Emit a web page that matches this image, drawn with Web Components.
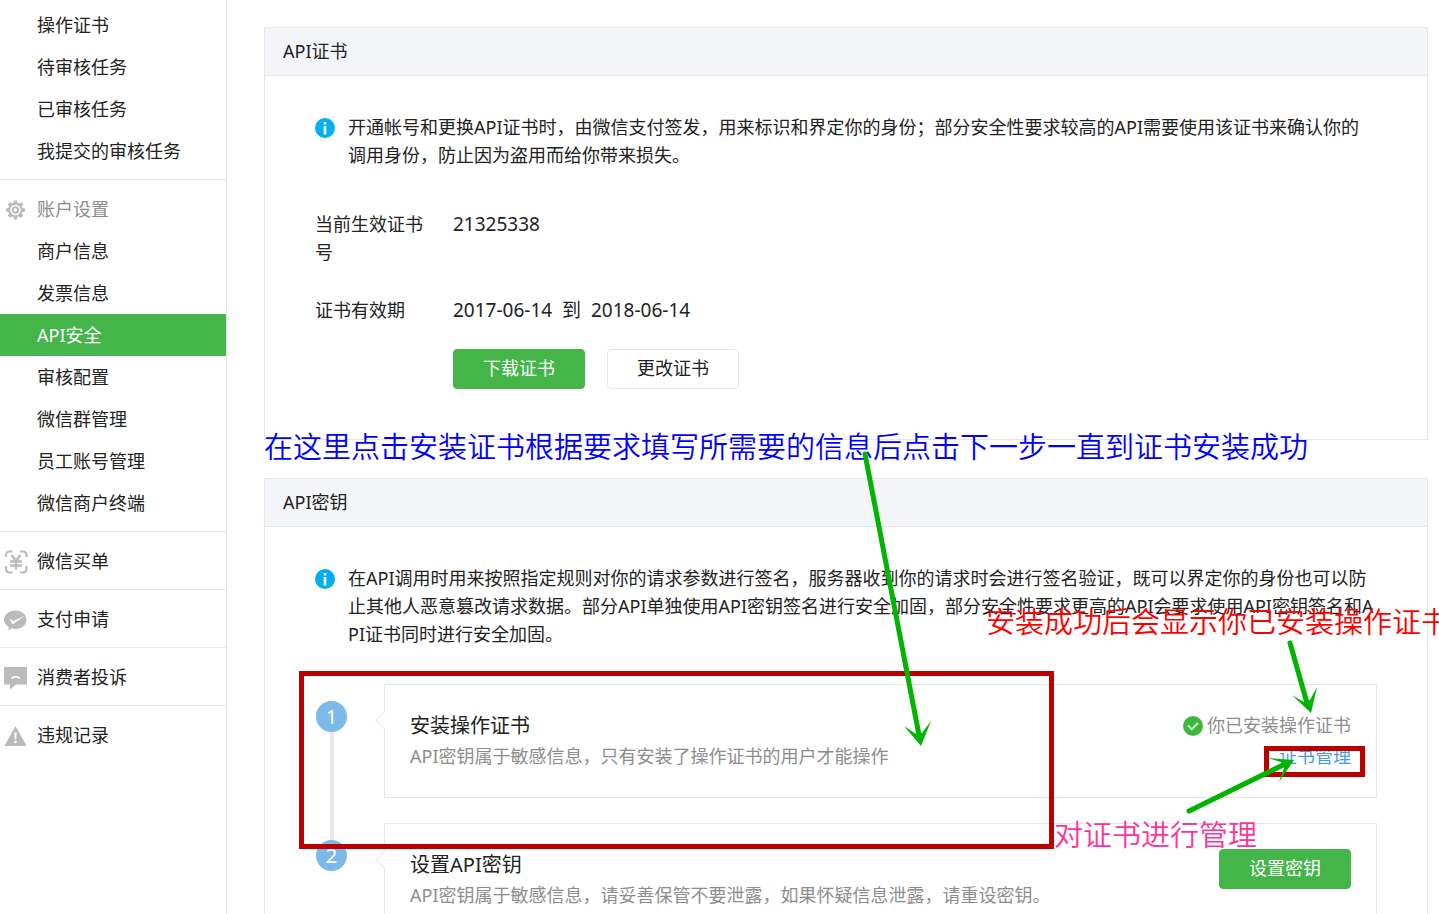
<!DOCTYPE html>
<html lang="zh-CN">
<head>
<meta charset="utf-8">
<title>API安全</title>
<style>
    html {
        scrollbar-width: none;
    }
    body {
        margin: 0;
        background: #fff;
        color: #222;
        font: 400 18px/28px "Noto Sans", "Noto Sans CJK SC", sans-serif;
    }
</style>
</head>
<body>
<merchant-page>
    <side-menu slot="side">
        <menu-group>
            <menu-item>操作证书</menu-item>
            <menu-item>待审核任务</menu-item>
            <menu-item>已审核任务</menu-item>
            <menu-item>我提交的审核任务</menu-item>
        </menu-group>
        <menu-group>
            <menu-item icon="gear" heading>账户设置</menu-item>
            <menu-item>商户信息</menu-item>
            <menu-item>发票信息</menu-item>
            <menu-item active>API安全</menu-item>
            <menu-item>审核配置</menu-item>
            <menu-item>微信群管理</menu-item>
            <menu-item>员工账号管理</menu-item>
            <menu-item>微信商户终端</menu-item>
        </menu-group>
        <menu-group><menu-item icon="yen">微信买单</menu-item></menu-group>
        <menu-group><menu-item icon="pay">支付申请</menu-item></menu-group>
        <menu-group><menu-item icon="complaint">消费者投诉</menu-item></menu-group>
        <menu-group last><menu-item icon="warning">违规记录</menu-item></menu-group>
    </side-menu>

    <content-panel heading="API证书">
        <info-tip>开通帐号和更换API证书时，由微信支付签发，用来标识和界定你的身份；部分安全性要求较高的API需要使用该证书来确认你的调用身份，防止因为盗用而给你带来损失。</info-tip>
        <cert-details>
            <span slot="number">21325338</span>
            <span slot="period">2017-06-14&nbsp; 到&nbsp; 2018-06-14</span>
            <action-button slot="actions" primary>下载证书</action-button>
            <action-button slot="actions">更改证书</action-button>
        </cert-details>
    </content-panel>

    <content-panel heading="API密钥">
        <info-tip>在API调用时用来按照指定规则对你的请求参数进行签名，服务器收到你的请求时会进行签名验证，既可以界定你的身份也可以防止其他人恶意篡改请求数据。部分API单独使用API密钥签名进行安全加固，部分安全性要求更高的API会要求使用API密钥签名和API证书同时进行安全加固。</info-tip>
        <step-list>
            <step-card number="1" heading="安装操作证书">
                API密钥属于敏感信息，只有安装了操作证书的用户才能操作
                <cert-status slot="side">你已安装操作证书</cert-status>
            </step-card>
            <step-card number="2" heading="设置API密钥" last>
                API密钥属于敏感信息，请妥善保管不要泄露，如果怀疑信息泄露，请重设密钥。
                <action-button slot="side" primary>设置密钥</action-button>
            </step-card>
        </step-list>
    </content-panel>

    <note-layer slot="notes">
        <note-box style="--x: 299px; --y: 671px; --w: 755px; --h: 178px"></note-box>
        <note-box style="--x: 1264px; --y: 746px; --w: 101px; --h: 31px"></note-box>
        <note-text style="--x: 264px; --y: 427px; color: #00f">在这里点击安装证书根据要求填写所需要的信息后点击下一步一直到证书安装成功</note-text>
        <note-text style="--x: 986px; --y: 602px; color: #f00">安装成功后会显示你已安装操作证书</note-text>
        <note-text style="--x: 1054px; --y: 815px; color: #ff3399">对证书进行管理</note-text>
    </note-layer>
</merchant-page>

<script>
class BaseElement extends HTMLElement {
    connectedCallback() {
        if (this.shadowRoot) return;
        const root = this.attachShadow({ mode: "open" });
        root.innerHTML = this.render();
    }
}

const ICONS = {
    gear: `<svg width="24" height="22" viewBox="-1 0 24 22"><path fill="#bbb" d="M9 1.500h3l.5 2.500 1.500.6 2.100-1.400 2.200 2.200L16.900 7.500l.6 1.500 2.500.5v3l-2.500.5-.6 1.500 1.400 2.100-2.200 2.200L14 17.400l-1.500.6-.5 2.500H9L8.500 18 7 17.400l-2.100 1.400-2.200-2.200 1.400-2.100-.6-1.500L1 12.500v-3L3.500 9l.6-1.500-1.400-2.100 2.200-2.200L7 4.600 8.500 4z"/>
        <circle cx="10.500" cy="11" r="4.500" fill="none" stroke="#fff" stroke-width="1.500"/><circle cx="10.500" cy="11" r="1.700" fill="#fff"/></svg>`,
    yen: `<svg width="24" height="24" viewBox="0 0 24 24" fill="none" stroke="#bbb">
        <path stroke-width="2.200" d="M2 7V5a3.500 3.500 0 0 1 3.500-3.500h3M16 1.500h3A3.500 3.500 0 0 1 22.500 5v2M22.500 16v3a3.500 3.500 0 0 1-3.500 3.500h-3M8.500 22.500h-3A3.500 3.500 0 0 1 2 19v-3"/>
        <path stroke-width="2.400" d="M7.500 5l4.500 6 4.500-6M12 11v8.500M6 11.500h12M6 15.500h12"/></svg>`,
    pay: `<svg width="24" height="22" viewBox="0 0 24 22"><path fill="#bbb" d="M11.500 1.500c6.300 0 11 4 11 9.300s-4.700 9.200-11 9.200c-1.400 0-2.600-.2-3.800-.5L4.500 21.500l.1-3.600C2 16.300 0 13.800 0 10.800 0 5.500 5.200 1.500 11.500 1.500z"/>
        <path fill="#fff" d="M5.500 9.500l4 2.500L21 6.500 9 15.300 7.800 14.300z"/></svg>`,
    complaint: `<svg width="24" height="24" viewBox="0 0 24 24"><path fill="#bbb" d="M0 1h23v17.500H12L6 23.500v-5H0z"/><path fill="none" stroke="#fff" stroke-width="1.500" d="M7.500 12.500c2-2.400 6.500-2.400 8.500 0"/></svg>`,
    warning: `<svg width="24" height="22" viewBox="0 0 24 22"><path fill="#bbb" d="M11.500 1l11.200 20H.300z"/><path fill="#fff" d="M10.300 7.500h2.400l-.5 7h-1.400z"/><circle cx="11.500" cy="17" r="1.300" fill="#fff"/></svg>`
};

class MerchantPage extends BaseElement {
    render() {
        return `
        <style>
            :host {
                display: grid;
                grid-template-columns: 227px minmax(0, 1fr);
                position: relative;
                min-height: 100vh;
            }
            main {
                display: flex;
                flex-direction: column;
                gap: 38px;
                padding: 27px 11px 27px 37px;
            }
        </style>
        <slot name="side"></slot>
        <main><slot></slot></main>
        <slot name="notes"></slot>`;
    }
}

class SideMenu extends BaseElement {
    render() {
        return `
        <style>
            :host { display: block; border-right: 1px solid #e7e7eb; }
            nav { margin-top: -4px; }
        </style>
        <nav><slot></slot></nav>`;
    }
}

class MenuGroup extends BaseElement {
    render() {
        return `
        <style>
            :host { display: block; padding: 8px 0 7px; border-bottom: 1px solid #e7e7eb; }
            :host([last]) { border-bottom: 0; }
        </style>
        <slot></slot>`;
    }
}

class MenuItem extends BaseElement {
    render() {
        const icon = ICONS[this.getAttribute("icon")] || "";
        return `
        <style>
            :host { display: block; }
            a {
                display: grid;
                grid-template-columns: 24px 1fr;
                gap: 9px;
                align-items: center;
                height: 42px;
                padding-left: 4px;
                color: inherit;
                text-decoration: none;
            }
            .icon { display: flex; padding-top: 2px; }
            :host([heading]) a { color: #8d8d8d; }
            :host([active]) a { background: #44b549; color: #fff; }
        </style>
        <a href="#"><span class="icon">${icon}</span><span><slot></slot></span></a>`;
    }
}

class ContentPanel extends BaseElement {
    render() {
        return `
        <style>
            :host { display: block; border: 1px solid #e7e7eb; }
            h2 {
                margin: 0;
                padding: 0 18px;
                border-bottom: 1px solid #e7e7eb;
                background: #f4f5f9;
                font: inherit;
                line-height: 47px;
            }
            .body { padding: 37px 50px 50px; }
        </style>
        <h2>${this.getAttribute("heading")}</h2>
        <div class="body"><slot></slot></div>`;
    }
}

class InfoTip extends BaseElement {
    render() {
        return `
        <style>
            :host { display: flex; gap: 13px; padding-right: 2px; }
            svg { flex: none; margin-top: 5px; }
            p { margin: 0; word-break: break-all; }
        </style>
        <svg width="20" height="20" viewBox="0 0 20 20"><circle cx="10" cy="10" r="10" fill="#00aff0"/><path fill="#fff" d="M8.700 4h2.600v2.400H8.700zM8.700 8h2.600v8.500H8.700z"/></svg>
        <p><slot></slot></p>`;
    }
}

class CertDetails extends BaseElement {
    render() {
        return `
        <style>
            :host { display: block; margin-top: 41px; }
            dl {
                display: grid;
                grid-template-columns: 110px 1fr;
                gap: 30px 28px;
                margin: 0;
            }
            dd { margin: 0; font-size: 19px; }
            .actions { display: flex; gap: 22px; margin: 25px 0 0 138px; }
        </style>
        <dl>
            <dt>当前生效证书号</dt><dd><slot name="number"></slot></dd>
            <dt>证书有效期</dt><dd><slot name="period"></slot></dd>
        </dl>
        <div class="actions"><slot name="actions"></slot></div>`;
    }
}

class ActionButton extends BaseElement {
    render() {
        return `
        <style>
            :host { display: block; flex: none; }
            button {
                display: block;
                width: 132px;
                height: 40px;
                padding: 0 0 2px;
                border: 1px solid #e7e7eb;
                border-radius: 4px;
                background: #fff;
                color: #222;
                font: inherit;
                cursor: pointer;
            }
            :host([primary]) button {
                border-color: #44b549;
                background: #44b549;
                color: #fff;
            }
        </style>
        <button type="button"><slot></slot></button>`;
    }
}

class StepList extends BaseElement {
    render() {
        return `
        <style>
            :host { display: flex; flex-direction: column; gap: 25px; margin-top: 36px; }
        </style>
        <slot></slot>`;
    }
}

class StepCard extends BaseElement {
    render() {
        return `
        <style>
            :host { display: grid; grid-template-columns: 33px 1fr; gap: 36px; }
            .rail {
                display: flex;
                flex-direction: column;
                align-items: center;
                margin-bottom: -42px;
                padding-top: 17px;
            }
            .rail b {
                width: 31px;
                border-radius: 50%;
                background: #7ab9e8;
                color: #fff;
                font-weight: 400;
                font-size: 20px;
                line-height: 31px;
                text-align: center;
            }
            .rail i { flex: 1; width: 4px; background: #e7e7eb; }
            :host([last]) .rail i { display: none; }
            .card {
                display: flex;
                justify-content: space-between;
                align-items: flex-start;
                position: relative;
                min-height: 62px;
                padding: 25px;
                border: 1px solid #e7e7eb;
            }
            /* pointer towards the number */
            .card::before {
                content: "";
                position: absolute;
                left: -7px;
                top: 29px;
                width: 12px;
                height: 12px;
                border: solid #e7e7eb;
                border-width: 0 0 1px 1px;
                background: #fff;
                transform: rotate(45deg);
            }
            h3 { margin: 0; font: inherit; font-size: 20px; line-height: 31px; }
            p { margin: 0; color: #8d8d8d; line-height: 31px; }
        </style>
        <div class="rail"><b>${this.getAttribute("number")}</b><i></i></div>
        <div class="card">
            <div>
                <h3>${this.getAttribute("heading")}</h3>
                <p><slot></slot></p>
            </div>
            <slot name="side"></slot>
        </div>`;
    }
}

class CertStatus extends BaseElement {
    render() {
        return `
        <style>
            :host { display: block; text-align: right; line-height: 31px; }
            div { display: flex; align-items: center; gap: 4px; color: #8d8d8d; }
            a { color: #459ae9; text-decoration: none; }
        </style>
        <div>
            <svg width="20" height="20" viewBox="0 0 20 20"><circle cx="10" cy="10" r="10" fill="#3eb83a"/><path d="M5 9.500l3.800 3.800L15 7" fill="none" stroke="#e0f4e0" stroke-width="1.800"/></svg>
            <span><slot></slot></span>
        </div>
        <a href="#">证书管理</a>`;
    }
}

class NoteLayer extends BaseElement {
    render() {
        return `
        <style>
            :host { position: absolute; inset: 0; overflow: hidden; pointer-events: none; font-weight: 350; }
            svg { position: absolute; left: 0; top: 0; width: 100%; height: 100%; }
        </style>
        <slot></slot>
        <svg fill="#00b400" stroke="#00b400" aria-hidden="true">
            <g stroke-width="5" stroke-linecap="round">
                <path d="M865 454L919 735"/>
                <path d="M1290 643L1307 703"/>
                <path d="M1189 811L1283 765"/>
            </g>
            <g stroke="none">
                <path d="M904 726L916 734L922 733L931 721L921 746z"/>
                <path d="M1292 695L1304 702L1310 700L1317 687L1311 713z"/>
                <path d="M1267 758L1281 762L1284 768L1279 782L1294 760z"/>
            </g>
        </svg>`;
    }
}

class NoteBox extends BaseElement {
    render() {
        return `
        <style>
            :host {
                position: absolute;
                left: var(--x);
                top: var(--y);
                width: var(--w);
                height: var(--h);
                box-sizing: border-box;
                border: 5px solid #b00;
            }
        </style>`;
    }
}

class NoteText extends BaseElement {
    render() {
        return `
        <style>
            :host {
                position: absolute;
                left: var(--x);
                top: var(--y);
                font-size: 29px;
                line-height: 40px;
                white-space: nowrap;
            }
        </style>
        <slot></slot>`;
    }
}

customElements.define("merchant-page", MerchantPage);
customElements.define("side-menu", SideMenu);
customElements.define("menu-group", MenuGroup);
customElements.define("menu-item", MenuItem);
customElements.define("content-panel", ContentPanel);
customElements.define("info-tip", InfoTip);
customElements.define("cert-details", CertDetails);
customElements.define("action-button", ActionButton);
customElements.define("step-list", StepList);
customElements.define("step-card", StepCard);
customElements.define("cert-status", CertStatus);
customElements.define("note-layer", NoteLayer);
customElements.define("note-box", NoteBox);
customElements.define("note-text", NoteText);
</script>
</body>
</html>
